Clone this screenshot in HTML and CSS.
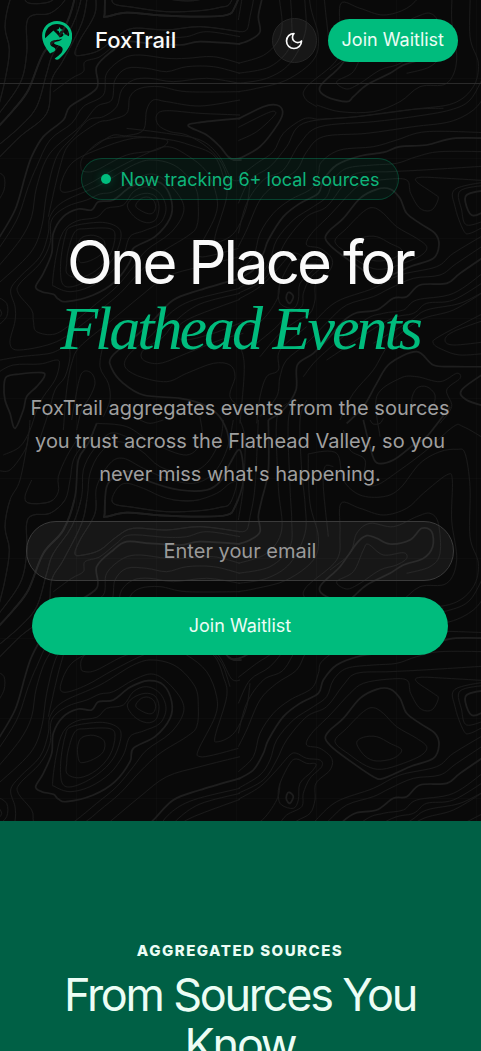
FILE: index.html
```html
<!DOCTYPE html>
<html lang="en">
<head>
<meta charset="utf-8">
<meta name="viewport" content="width=device-width, initial-scale=1">
<title>FoxTrail</title>
<link rel="stylesheet" href="styles.css">
</head>
<body>
<div class="top">
  <svg class="topo" aria-hidden="true">
    <defs>
      <pattern id="contours" patternUnits="userSpaceOnUse" width="1800" height="1500" patternTransform="scale(.33333)">
        <g id="contour-lines"></g>
        <use href="#contour-lines" y="-1500"/>
      </pattern>
    </defs>
    <rect width="100%" height="100%" fill="url(#contours)"/>
  </svg>
  <header class="header">
    <a class="brand" href="#">
      <svg class="brand-mark" viewBox="0 0 90 118" aria-hidden="true">
        <path fill="#00bc7d" fill-rule="evenodd" d="M45 0C19 0 0 20 0 45c0 19 10 37 24 53 8-4 17-7 16-13-1-6-16-7-16-16 0-9 13-11 22-12 7-1 12-2 15-5-1 5-7 8-16 10-8 2-11 4-8 7 5 5 23 4 25 15 2 12-15 22-24 30 5 5 10 4 14 0 21-20 39-43 39-69C91 20 71 0 45 0ZM45 9c19 0 34 12 37 30l-1 7-13-7-8 9-7 2-8-11-11-10L9 52C6 26 24 9 45 9Z"/>
        <path fill="#00bc7d" d="m53 18 3 6 7 3-7 3-3 7-3-7-7-3 7-3zM65 34l3 4-3 4-3-4z"/>
      </svg>
      <span class="brand-name">FoxTrail</span>
    </a>
    <div class="actions">
      <button class="theme" type="button" aria-label="Toggle theme">
        <svg viewBox="0 0 24 24" aria-hidden="true"><path d="M12 3a6 6 0 0 0 9 9 9 9 0 1 1-9-9Z"/></svg>
      </button>
      <button class="join join-small" type="button">Join Waitlist</button>
    </div>
  </header>
  <main class="hero">
    <p class="badge"><span class="dot"></span>Now tracking 6+ local sources</p>
    <h1 class="title">One Place for <em>Flathead Events</em></h1>
    <p class="lead">FoxTrail aggregates events from the sources you trust across the Flathead Valley, so you never miss what's happening.</p>
    <form class="signup">
      <input class="email" type="email" placeholder="Enter your email" aria-label="Email address">
      <button class="join join-wide" type="button">Join Waitlist</button>
    </form>
  </main>
</div>
<section class="sources">
  <p class="eyebrow">Aggregated Sources</p>
  <h2 class="sources-title">From Sources You Know</h2>
</section>
<script src="contours.js"></script>
</body>
</html>
```

FILE: styles.css
```css
* { box-sizing: border-box; }

body {
  margin: 0;
  background: #006045;
  color: #fafafa;
  font-family: Inter, "Liberation Sans", sans-serif;
  overflow: hidden;
  height: 100vh;
}

h1, h2, p { margin: 0; }
button, input { font: inherit; }

.top {
  position: relative;
  background-color: #090909;
  background-image:
    linear-gradient(90deg, rgba(255, 255, 255, .016) 1px, transparent 1px),
    linear-gradient(rgba(255, 255, 255, .016) 1px, transparent 1px);
  background-size: 80px 80px;
  background-position: 76px 78px;
}

.topo {
  position: absolute;
  inset: 0;
  width: 100%;
  height: 100%;
}

.topo path {
  fill: none;
  stroke: #1a1a1a;
  stroke-width: 3;
}

.topo .major {
  stroke: #1e1e1e;
  stroke-width: 5;
}

.header {
  position: relative;
  display: flex;
  align-items: center;
  justify-content: space-between;
  padding: 18px 23px 20px 42px;
  border-bottom: 1px solid #2a2a2a;
}

.brand {
  display: flex;
  align-items: center;
  gap: 23px;
  color: inherit;
  text-decoration: none;
}

.brand-mark { width: 30px; height: 39px; }
.brand-name { font-size: 22px; font-weight: 500; line-height: 32px; padding-bottom: 2px; }

.actions { display: flex; align-items: center; gap: 11px; }

.theme {
  display: grid;
  place-items: center;
  width: 45px;
  height: 45px;
  padding: 0;
  border: 1px solid #252525;
  border-radius: 50%;
  background: rgba(255, 255, 255, .06);
  color: #fafafa;
}

.theme svg {
  width: 20px;
  height: 20px;
  fill: none;
  stroke: currentColor;
  stroke-width: 2;
  stroke-linecap: round;
  stroke-linejoin: round;
}

.join {
  border: 0;
  border-radius: 30px;
  background: #00bc7d;
  color: #ecfdf5;
  font-size: 18px;
  font-weight: 400;
  padding: 0 14px 2px;
}

.join-small { height: 43px; }

.hero {
  position: relative;
  display: flex;
  flex-direction: column;
  align-items: center;
  padding: 74px 27px 166px 26px;
  text-align: center;
}

.badge {
  display: flex;
  align-items: center;
  gap: 10px;
  height: 42px;
  padding: 0 19px;
  border: 1px solid rgba(0, 188, 125, .28);
  border-radius: 21px;
  background: rgba(0, 188, 125, .07);
  color: #0eb47a;
  font-size: 18px;
}

.dot {
  width: 10px;
  height: 10px;
  border-radius: 50%;
  background: #00bc7d;
  box-shadow: 0 0 10px rgba(0, 188, 125, .3);
}

.title {
  margin-top: 29px;
  font-size: 60px;
  font-weight: 400;
  line-height: 66px;
  letter-spacing: -3px;
}

.title em {
  display: block;
  color: #00bc7d;
  font-family: "Liberation Serif", serif;
  font-size: 62px;
}

.lead {
  max-width: 430px;
  margin-top: 31px;
  color: #9f9f9f;
  font-size: 20px;
  line-height: 33px;
}

.signup {
  display: flex;
  flex-direction: column;
  gap: 16px;
  width: 100%;
  margin-top: 30px;
}

.email {
  width: 100%;
  height: 60px;
  padding: 0 24px;
  border: 1px solid #3a3a3a;
  border-radius: 30px;
  background: rgba(255, 255, 255, .06);
  color: #fafafa;
  font-size: 20px;
  text-align: center;
}

.email::placeholder { color: #9a9a9a; opacity: 1; }

.join-wide { height: 58px; margin: 0 6px; }

.sources {
  padding: 119px 27px 118px 26px;
  background: #006045;
  color: #ecfdf5;
  text-align: center;
}

.eyebrow {
  font-size: 15px;
  font-weight: 800;
  line-height: 22px;
  letter-spacing: .1em;
  text-transform: uppercase;
}

.sources-title {
  margin-top: 8px;
  font-size: 45px;
  font-weight: 400;
  line-height: 50px;
  letter-spacing: -.05em;
}
```

FILE: contours.js
```js
// Contour lines of the topographic backdrop. Each group has an origin and
// lines of x y pairs; "M" marks a major line, "Z" closes it.
const groups = [
  [0, 390, `
Z 407 228 420 208 440 201 460 210 467 230 460 248 445 251 425 243
Z 382 228 400 203 435 190 465 198 477 230 468 268 440 278 405 262
Z 233 350 245 323 280 316 312 332 310 365 280 388 245 398 235 385
Z 205 360 225 305 260 296 330 296 345 320 330 375 290 420 240 443 202 432 200 400
Z 182 400 195 320 215 290 300 277 350 290 363 320 340 385 290 435 225 468 188 462
Z 158 455 170 370 190 305 230 273 290 262 320 235 370 225 400 185 440 170 480 190 498 235 480 280 430 303 390 320 370 375 330 430 270 470 210 485 165 470
MZ 107 470 130 430 155 370 160 310 190 260 235 237 275 240 295 215 340 210 390 172 445 152 490 165 515 215 510 265 465 320 400 355 390 395 345 455 280 495 200 515 175 507 160 493 125 485
Z 100 573 95 540 55 490 60 460 120 400 150 340 155 270 200 230 260 210 300 192 340 185 400 150 455 132 500 155 545 210 548 255 510 310 440 360 400 410 350 470 290 520 225 573 165 612 110 605
Z 45 573 45 530 32 480 60 440 120 380 145 310 150 260 190 215 300 165 400 105 460 90 530 110 585 170 595 230 590 290 560 320 480 370 420 425 360 490 300 540 260 573 170 635 60 660 30 640
L 715 355 640 375 600 380 595 360 645 260 650 200 620 125 560 75 500 50 430 75 340 120 260 165 195 187 182 165 215 100 290 60 400 25 500 28 570 45 640 75 670 140 680 200 645 320 655 335 690 320 715 290 740 230 750 160
L 720 150 705 152 690 140 655 75 600 30 500 10 380 -5
Z 243 115 250 80 310 30 400 20 500 30 470 60 380 75 290 120 255 125
L -10 500 20 520 20 560 -10 590
L -10 525 5 550 -10 570
M 685 80 700 90 725 90`],
  [0, 0, `
L -10 340 15 240 28 150 15 80 30 0 60 -60 85 -190 90 -240
L -10 -90 30 -90 75 -150 85 -190
L 230 -180 200 -130 175 -70 175 -25 150 5 90 10 75 -10 95 -60
L -10 350 60 250 80 160 80 70 100 45 150 40 195 0 210 -60 220 -120 245 -160 280 -200
M -10 385 40 330 85 270 130 160 190 90 225 -10 235 -120 265 -170 290 -230
L -10 440 60 380 110 320 140 220 160 160 215 80 245 -10 250 -90 280 -150 330 -200 380 -190
L -10 480 60 410 140 340 155 240 190 180 245 70 262 -10 270 -80 300 -140 350 -175 420 -150 480 -100 560 -80 620 -110 660 -180 670 -240
L 720 95 600 80 500 90 400 85 350 110 300 150 250 165 225 162 240 120 285 40 290 -40 330 -110 370 -125 430 -95 500 -65 580 -50 640 -80 680 -150 700 -240
MZ 318 50 314 40 320 -40 350 -75 390 -85 450 -55 540 -30 620 -30 660 -55 690 -110 720 -150 730 -60 705 20 680 45 600 50 480 46 380 38
Z 340 10 345 -25 375 -50 430 -35 500 -5 580 2 650 -20 690 -50 710 -50 690 10 660 22 600 32 500 35 400 22
L 160 275 215 235 250 215 255 185 300 170 350 130 390 105 500 112 560 110 620 95 720 110
M -10 725 45 630 75 530 95 470 130 410 190 360 210 320 290 265 290 200 340 150 380 125 450 130 540 135 600 125 720 132
L -10 755 50 660 85 560 110 500 150 420 215 370 250 320 310 285 320 220 370 175 420 165 500 175 560 175 640 170 720 190
L -10 805 60 720 95 650 110 560 150 460 240 380 290 320 335 300 345 240 380 205 440 205 500 215 560 200 640 200 720 220
L -10 855 90 760 125 680 140 580 170 470 220 410 265 360 310 350 350 320 365 270 400 240 450 235 520 245 620 235 720 250
L 145 650 180 500 210 430 290 370 330 360 380 340 390 290 420 265 480 260 560 275 720 275
L 270 450 335 407 380 407 430 390 440 330 460 300 500 305 600 318 720 300
L 720 345 600 340 500 332 470 345 475 375 510 395 560 405 620 440 665 490 690 560
M 720 355 600 367 565 378 620 405 660 440 690 475 720 475
L -10 515 12 530 12 570 -10 610`],
  [0, 630, `
MZ 12 530 20 500 60 492 125 488 133 500 110 530 80 560 70 600 45 655 30 610 15 570
L -10 490 40 465 120 462 170 450 178 465 165 510 130 560 110 600 90 660 60 710 10 735
L -10 452 60 440 150 430 200 410 210 440 195 500 165 540 145 610 115 700
L 215 630 235 520 250 485 275 490 285 520 270 560 245 600 230 660
L 190 660 200 540 215 460 240 410 330 335 420 260 500 200 600 170 720 140
L 310 400 300 470 325 520 330 570 310 620
M 720 205 600 240 520 270 460 330 400 385 335 440 335 475 370 520 430 555 540 565 600 580 650 610 680 660 690 720
L 720 235 580 270 510 310 460 370 390 430 375 470 420 500 500 515 560 490 640 460 690 465 705 500 690 560 730 600
L 720 250 600 282 530 330 490 380 430 420 430 450 480 460 560 430 660 390 730 370
L 720 268 570 325 530 360 550 390 640 370 730 335
L 420 630 450 640 490 630
L 290 640 380 650 460 700 560 735 605 690 600 620`],
  [720, 390, `
Z 350 340 370 322 410 320 450 340 485 360 460 385 410 393 375 378
Z 285 335 320 295 370 245 400 233 430 250 470 290 530 325 560 350 545 375 490 400 425 418 380 408 330 375
MZ 256 325 270 300 310 265 360 205 410 178 450 177 480 205 500 250 540 280 585 310 597 345 580 385 510 410 430 445 400 440 340 400 280 355
MZ 140 495 148 487 160 500 150 520 140 510
Z 115 500 120 460 150 400 170 387 200 400 228 402 215 425 180 460 175 510 160 535 125 525
L -5 508 60 470 110 420 150 375 170 370 200 385 240 390 245 410 210 445 190 490 185 530 140 555 110 590 50 640
L 60 680 120 610 170 573 210 550 225 510 228 460 270 420 275 385 240 355 200 345 215 310 270 255 330 190 370 160 440 148 500 150 512 190 540 235 575 240 595 205 580 190 530 155 540 142 620 145 740 152
M -5 447 40 420 70 370 85 330 130 260 180 220 235 190 250 150 290 105 360 78 430 67 480 50 560 45 640 25 750 25
L -5 475 60 435 90 390 110 330 160 270 220 230 260 200 280 150 320 115 400 105 470 100 530 80 600 65 740 65
L -5 490 70 450 110 390 140 330 200 260 260 230 310 165 350 130 450 125 550 120 740 108
L -5 425 40 380 60 310 100 250 150 210 215 175 235 130 245 95 300 60 400 50 470 30 560 5 740 8
L -5 350 20 300 60 210 110 160 170 120 200 65 250 20 380 10 520 -10 630 -25 700 -60 740 -110
L -5 310 20 220 70 150 130 120 180 40 240 -10 400 -25 520 -40 630 -60 690 -90 730 -160
L -5 220 30 150 90 110 140 50 190 -20 350 -40 520 -62 610 -65
L -5 142 50 100 100 65 130 10 190 -33 230 -33
M -5 87 60 50 115 -20 128 -55 110 -75 70 -70 -5 -33
L -5 32 50 5 100 -40 105 -55 80 -50 -5 -8
L 740 155 645 178 645 230 670 300 690 310 740 285
L 740 165 660 183 665 240 680 285 740 270
MZ 740 185 680 195 680 230 700 257 740 235
M 85 870 130 840 168 780 172 705 220 670 270 620 310 573 350 548 410 540 460 505 500 500 540 465 620 460 660 430 740 375
L 60 860 110 800 120 740 140 690 200 640 265 573 320 525 400 500 450 475 520 445 600 435 650 400 740 340
L 225 573 290 515 400 475 480 435 590 410 640 370 740 310
L 190 740 240 680 370 573 430 550 490 540 530 510 640 490 740 420
L 260 690 440 573 520 550 560 520 640 510 740 450
L 400 640 510 573 560 540 660 520 740 480`],
  [720, 630, `
M 320 640 370 590 410 520 450 460 530 425 580 465 640 470 740 470
M 740 485 665 540 680 570 740 590
L 740 305 600 378 580 400 610 420 660 435 740 430
L 740 328 640 365 615 390 640 405 740 395
Z 515 570 530 535 560 530 585 555 575 590 530 600
L 420 680 410 560 480 505 530 500 600 515 650 490 660 505 620 540 635 590 600 640
L 300 630 340 550 400 480 450 400 540 330 640 300 740 240
L -5 400 10 440 12 500 0 640
L 50 640 60 560 80 500 115 480 120 420 200 350
L -5 345 60 335 110 270 120 220`],
  [720, 1260, `
M 85 0 85 150 65 240 55 290 60 335 30 360 -5 372
L -5 335 20 330 30 290 45 200 55 0
L -5 300 10 200 15 60 0 0
L 140 -50 110 0 115 200 125 330 80 400 -5 430
L 170 -60 145 0 150 200 155 300 150 380 90 440 -5 460
L 200 -60 180 0 185 150 195 250 195 340 150 430 80 475 -5 490
L -5 515 50 505 140 480 220 420 235 350 210 250 205 120 215 100 290 100 310 180 360 225 430 230 480 205 540 130 600 95 650 88 675 100 690 200 690 350 715 430 700 500 640 550 520 568 350 590 230 598
L 265 350 250 200 255 140 280 140
L 230 560 195 535 200 500 290 420 300 340 303 250 360 265 430 285 500 265 550 220 620 165 637 180 635 300 650 420 620 490 540 500 480 545 400 575 300 575 230 555
L 270 450 330 400 350 340 390 310 460 320 530 290 570 280 595 310 600 400 570 440 500 460
MZ 240 500 300 440 350 370 380 347 410 355 450 372 510 360 545 325 575 335 578 380 550 415 490 435 450 460 380 495 340 530 320 545 260 530
Z 290 485 340 455 370 390 385 373 430 405 490 398 500 415 470 435 420 450 360 490 320 507
M 630 -40 560 50 520 75 460 120 410 128 390 80 370 0
L 740 60 670 20 640 20 560 90 480 150 410 195 370 185 375 120 330 90 310 30
L 390 0 400 12 420 10 430 -5`]
];

// Catmull-Rom spline through the points, written as cubic Béziers.
function spline(points, closed) {
  const n = points.length;
  const at = i => closed ? points[(i + n) % n] : points[Math.max(0, Math.min(n - 1, i))];
  let d = `M${at(0)}`;
  for (let i = 0; i < (closed ? n : n - 1); i++) {
    const [a, b, c, e] = [at(i - 1), at(i), at(i + 1), at(i + 2)];
    d += `C${b[0] + (c[0] - a[0]) / 6} ${b[1] + (c[1] - a[1]) / 6} ${c[0] - (e[0] - b[0]) / 6} ${c[1] - (e[1] - b[1]) / 6} ${c[0]} ${c[1]}`;
  }
  return d;
}

const holder = document.getElementById("contour-lines");
for (const [dx, dy, text] of groups) {
  for (const row of text.trim().split("\n")) {
    const [kind, ...v] = row.split(" ");
    const points = [];
    for (let i = 0; i < v.length; i += 2) points.push([+v[i] + dx, +v[i + 1] + dy]);
    const make = shift => {
      const path = document.createElementNS("http://www.w3.org/2000/svg", "path");
      path.setAttribute("d", spline(points.map(p => [p[0], p[1] + shift]), kind.includes("Z")));
      if (kind.includes("M")) path.setAttribute("class", "major");
      holder.append(path);
    };
    make(0);
    if (points.some(p => p[1] < 0)) make(1500);
  }
}
```
